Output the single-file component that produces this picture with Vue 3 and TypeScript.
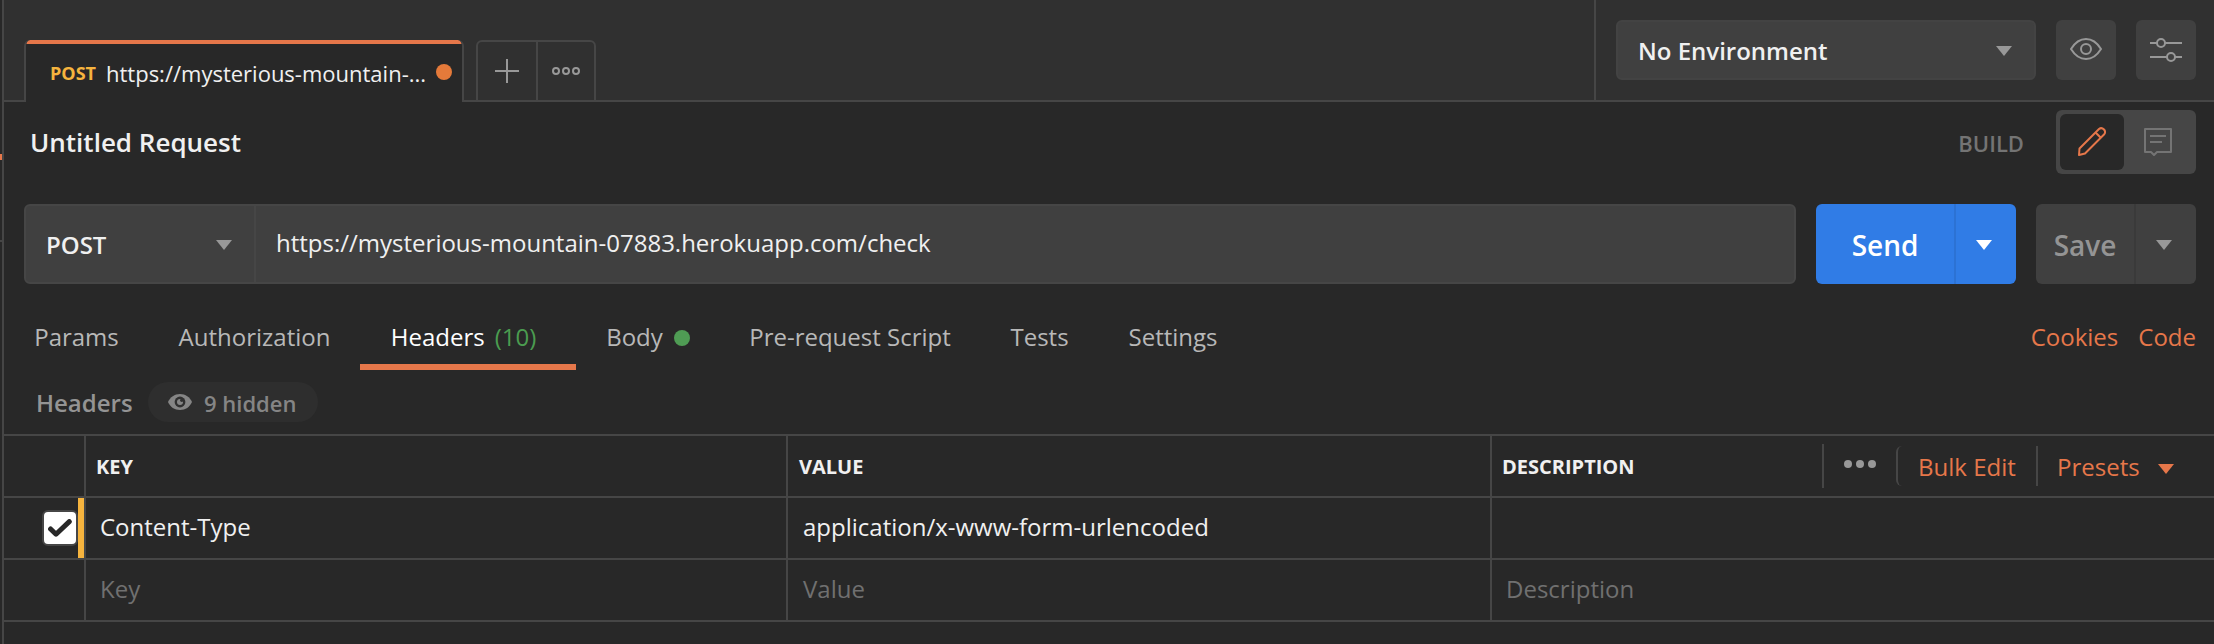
<script setup lang="ts">
interface RequestTab {
  label: string
  width: number
  count?: string
  dot?: boolean
  active?: boolean
}

interface HeaderRow {
  key: string
  value: string
  description: string
  checked: boolean
  placeholder: boolean
}

const requestTabs: RequestTab[] = [
  { label: 'Params', width: 145 },
  { label: 'Authorization', width: 211 },
  { label: 'Headers', width: 216, count: '(10)', active: true },
  { label: 'Body', width: 144, dot: true },
  { label: 'Pre-request Script', width: 260 },
  { label: 'Tests', width: 119 },
  { label: 'Settings', width: 148 },
]

const rows: HeaderRow[] = [
  { key: 'Content-Type', value: 'application/x-www-form-urlencoded', description: '', checked: true, placeholder: false },
  { key: 'Key', value: 'Value', description: 'Description', checked: false, placeholder: true },
]
</script>

<template>
  <div class="app">
    <aside class="rail"><i class="rail-mark"></i><i class="rail-line"></i></aside>
    <main class="main">
      <header class="topbar">
        <div class="tab">
          <span class="tab-method">POST</span>
          <span class="tab-name">https://mysterious-mountain-...</span>
          <i class="tab-dot"></i>
        </div>
        <div class="tab-actions">
          <button class="tab-btn">
            <svg width="24" height="24" viewBox="0 0 24 24"><path d="M0 12H24M12 0V24" stroke="#989898" stroke-width="2" /></svg>
          </button>
          <button class="tab-btn more">
            <svg width="28" height="8" viewBox="0 0 28 8" fill="none" stroke="#989898" stroke-width="2">
              <circle cx="4" cy="4" r="3" /><circle cx="14" cy="4" r="3" /><circle cx="24" cy="4" r="3" />
            </svg>
          </button>
        </div>
        <div class="env">
          <div class="env-select">
            <span>No Environment</span>
            <svg class="caret" width="16" height="10" viewBox="0 0 16 10"><path d="M0 0H16L8 10Z" /></svg>
          </div>
          <button class="icon-btn">
            <svg class="eye" width="32" height="22" viewBox="0 0 32 22" fill="none" stroke="#989898" stroke-width="2">
              <path d="M1 11C5 4.5 10 1 16 1S27 4.5 31 11C27 17.500 22 21 16 21S5 17.500 1 11Z" stroke-linejoin="round" />
              <circle cx="16" cy="11" r="5" />
            </svg>
          </button>
          <button class="icon-btn">
            <svg width="32" height="24" viewBox="0 0 32 24" fill="none" stroke="#989898" stroke-width="2">
              <path d="M0 5H7M15 5H32M0 19H17M25 19H32" />
              <circle cx="11" cy="5" r="4" /><circle cx="21" cy="19" r="4" />
            </svg>
          </button>
        </div>
      </header>

      <section class="title-row">
        <h1 class="title">Untitled Request</h1>
        <span class="build">BUILD</span>
        <div class="mode">
          <div class="mode-edit">
            <svg width="28" height="29" viewBox="0 0 28 29" fill="none" stroke="#e6774a" stroke-width="2" stroke-linejoin="round">
              <path d="M1 28L1.500 21.500L21 2Q23.500 0 26 2.500Q28.200 5 26 7.500L7 26.500Z" /><path d="M17.500 5.500L22.800 10.800" />
            </svg>
          </div>
          <div class="mode-comment">
            <svg width="28" height="28" viewBox="0 0 28 28" fill="none" stroke="#747474" stroke-width="2" stroke-linejoin="round">
              <path d="M1 1H27V24H13L10 27L7 24H1Z" /><path d="M6 8H22M6 14H18" />
            </svg>
          </div>
        </div>
      </section>

      <section class="url-row">
        <div class="url-box">
          <div class="method">
            <span>POST</span>
            <svg class="caret" width="16" height="10" viewBox="0 0 16 10"><path d="M0 0H16L8 10Z" /></svg>
          </div>
          <div class="url"><span>https://mysterious-mountain-07883.herokuapp.com/check</span></div>
        </div>
        <div class="split send">
          <div class="split-label"><span>Send</span></div>
          <div class="split-caret"><svg class="caret" width="16" height="10" viewBox="0 0 16 10"><path d="M0 0H16L8 10Z" /></svg></div>
        </div>
        <div class="split save">
          <div class="split-label"><span>Save</span></div>
          <div class="split-caret"><svg class="caret" width="16" height="10" viewBox="0 0 16 10"><path d="M0 0H16L8 10Z" /></svg></div>
        </div>
      </section>

      <nav class="req-tabs">
        <div
          v-for="tab in requestTabs"
          :key="tab.label"
          class="req-tab"
          :class="{ active: tab.active }"
          :style="{ width: tab.width + 'px' }"
        >
          <span>{{ tab.label }}</span>
          <span v-if="tab.count" class="count">{{ tab.count }}</span>
          <i v-if="tab.dot" class="green-dot"></i>
        </div>
        <div class="links"><a>Cookies</a><a>Code</a></div>
      </nav>

      <section class="sub">
        <span class="sub-title">Headers</span>
        <div class="pill">
          <svg width="24" height="16" viewBox="0 0 24 16">
            <path d="M12 0C6.500 0 2.200 3 0 8C2.200 13 6.500 16 12 16S21.800 13 24 8C21.800 3 17.500 0 12 0Z" fill="#858585" />
            <circle cx="12" cy="8" r="5.400" fill="#303030" />
            <circle cx="12" cy="8" r="3" fill="#858585" />
            <circle cx="13.800" cy="6.200" r="1.700" fill="#303030" />
          </svg>
          <span>9 hidden</span>
        </div>
      </section>

      <section class="table">
        <div class="row head">
          <div class="cell check"></div>
          <div class="cell key">KEY</div>
          <div class="cell value">VALUE</div>
          <div class="cell desc">
            <span>DESCRIPTION</span>
            <div class="tools">
              <div class="tool dots">
                <svg width="32" height="8" viewBox="0 0 32 8" fill="#989898"><circle cx="4" cy="4" r="4" /><circle cx="16" cy="4" r="4" /><circle cx="28" cy="4" r="4" /></svg>
              </div>
              <div class="tool bulk"><span>Bulk Edit</span></div>
              <div class="tool presets">
                <span>Presets</span>
                <svg class="caret" width="16" height="10" viewBox="0 0 16 10"><path d="M0 0H16L8 10Z" /></svg>
              </div>
            </div>
          </div>
        </div>
        <div v-for="row in rows" :key="row.key" class="row" :class="{ placeholder: row.placeholder }">
          <div class="cell check" :class="{ marked: row.checked }">
            <div v-if="row.checked" class="box">
              <svg width="24" height="18" viewBox="0 0 24 18" fill="none" stroke="#282828" stroke-width="5" stroke-linecap="round" stroke-linejoin="round">
                <path d="M2.600 10L8 15.200L21.300 2.600" />
              </svg>
            </div>
          </div>
          <div class="cell key"><span>{{ row.key }}</span></div>
          <div class="cell value"><span>{{ row.value }}</span></div>
          <div class="cell desc"><span>{{ row.description }}</span></div>
        </div>
      </section>
    </main>
  </div>
</template>

<style>
body {
  margin: 0;
  background: #282828;
}
</style>

<style scoped>
* {
  box-sizing: border-box;
}
.app {
  display: flex;
  width: 2214px;
  height: 644px;
  overflow: hidden;
  background: #282828;
  color: #f0f0f0;
  font-family: 'Open Sans', 'Noto Sans', sans-serif;
  font-size: 24px;
  line-height: 32px;
  white-space: nowrap;
}
svg {
  display: block;
  flex: none;
}
.caret {
  fill: #989898;
}
button {
  margin: 0;
  padding: 0;
  border: 0;
  background: none;
}
.rail {
  width: 4px;
  flex: none;
  border-right: 2px solid #464646;
  display: flex;
  flex-direction: column;
}
.rail-mark {
  height: 6px;
  margin-top: 154px;
  background: #e6774a;
}
.rail-line {
  height: 2px;
  margin-top: 80px;
  background: #464646;
}
.main {
  width: 2210px;
  flex: none;
}
.topbar {
  display: flex;
  align-items: flex-end;
  height: 102px;
  padding-left: 20px;
  background: linear-gradient(#464646, #464646) bottom / 100% 2px no-repeat #303030;
}
.tab {
  display: flex;
  align-items: center;
  width: 440px;
  height: 62px;
  padding: 2px 10px 0 24px;
  background: linear-gradient(#e6774a, #e6774a) top / 100% 4px no-repeat #282828;
  background-clip: padding-box;
  border: solid #464646;
  border-width: 0 2px;
  border-radius: 6px 6px 0 0;
}
.tab-method {
  width: 56px;
  padding-top: 2px;
  color: #f6b43e;
  font-size: 18px;
  font-weight: 700;
}
.tab-name {
  width: 330px;
  padding-top: 2px;
  font-size: 22px;
}
.tab-dot {
  width: 16px;
  height: 16px;
  border-radius: 50%;
  background: #e57a3a;
}
.tab-actions {
  display: flex;
  width: 120px;
  height: 62px;
  margin-left: 12px;
  border: 2px solid #464646;
  border-radius: 6px 6px 0 0;
}
.tab-btn {
  display: flex;
  align-items: center;
  justify-content: center;
  width: 58px;
}
.tab-btn.more {
  border-left: 2px solid #464646;
}
.env {
  display: flex;
  gap: 20px;
  height: 102px;
  margin-left: auto;
  padding: 20px 18px 0 20px;
  border-left: 2px solid #464646;
}
.env-select {
  display: flex;
  align-items: center;
  justify-content: space-between;
  width: 420px;
  height: 60px;
  padding: 0 22px 0 20px;
  border: 2px solid #434343;
  border-radius: 6px;
  background: #404040;
  font-weight: 600;
}
.env-select span {
  padding-top: 2px;
}
.env-select .caret {
  margin-top: 2px;
}
.icon-btn {
  display: flex;
  align-items: center;
  justify-content: center;
  width: 60px;
  height: 60px;
  border-radius: 6px;
  background: #404040;
}
.eye {
  margin-top: -2px;
}
.title-row {
  display: flex;
  align-items: center;
  height: 80px;
  padding: 0 18px 0 26px;
}
.title {
  margin: 0;
  font-size: 26px;
  font-weight: 600;
}
.build {
  margin-left: auto;
  margin-right: 32px;
  padding-top: 1px;
  color: #747474;
  font-size: 22px;
  font-weight: 600;
}
.mode {
  display: flex;
  width: 140px;
  height: 64px;
  padding: 4px;
  border-radius: 6px;
  background: #464646;
}
.mode-edit {
  width: 64px;
  height: 56px;
  padding: 13px 0 0 18px;
  border-radius: 6px;
  background: #282828;
}
.mode-comment {
  padding: 14px 0 0 20px;
}
.url-row {
  display: flex;
  gap: 20px;
  height: 80px;
  margin-top: 22px;
  padding: 0 18px 0 20px;
}
.url-box {
  display: flex;
  width: 1772px;
  border: 2px solid #464646;
  border-radius: 6px;
  background: #404040;
}
.method {
  display: flex;
  align-items: center;
  justify-content: space-between;
  width: 230px;
  padding: 0 22px 0 20px;
  border-right: 2px solid #464646;
  font-weight: 600;
}
.method span {
  padding-top: 2px;
}
.method .caret,
.split-caret .caret {
  margin-top: 2px;
}
.url {
  display: flex;
  align-items: center;
  padding: 0 0 3px 20px;
}
.split {
  display: flex;
  border-radius: 6px;
  font-size: 28px;
  font-weight: 600;
}
.split-label,
.split-caret {
  display: flex;
  align-items: center;
  justify-content: center;
}
.split-label span {
  padding-top: 1px;
}
.split-caret {
  flex: 1;
  padding-right: 4px;
}
.send {
  width: 200px;
  background: #307ce6;
  color: #fff;
}
.send .split-label {
  width: 140px;
  border-right: 2px solid #2c72d4;
}
.send .caret {
  fill: #fff;
}
.save {
  width: 160px;
  background: #404040;
  color: #949494;
}
.save .split-label {
  width: 100px;
  border-right: 2px solid #3a3a3a;
}
.req-tabs {
  display: flex;
  height: 86px;
  padding-right: 18px;
}
.req-tab {
  display: flex;
  justify-content: center;
  flex: none;
  padding-top: 37px;
  color: #b8b8b8;
}
.req-tab.active {
  padding-right: 9px;
  background: linear-gradient(#e6774a, #e6774a) bottom / 100% 6px no-repeat;
  color: #fff;
}
.count {
  margin-left: 10px;
  color: #4b9c50;
}
.green-dot {
  width: 16px;
  height: 16px;
  margin: 9px 0 0 11px;
  border-radius: 50%;
  background: #4f9c54;
}
.links {
  display: flex;
  gap: 20px;
  margin-left: auto;
  padding-top: 37px;
  color: #e6774a;
}
.sub {
  display: flex;
  height: 64px;
  padding: 12px 0 0 32px;
}
.sub-title {
  width: 112px;
  padding-top: 5px;
  color: #949494;
  font-weight: 600;
}
.pill {
  display: flex;
  align-items: center;
  width: 170px;
  height: 40px;
  padding-left: 20px;
  border-radius: 20px;
  background: #2e2e2e;
  color: #858585;
  font-size: 22px;
  font-weight: 600;
}
.pill span {
  margin-left: 12px;
  padding-top: 2px;
}
.table {
  border-top: 2px solid #464646;
}
.row {
  display: flex;
  height: 62px;
  border-bottom: 2px solid #464646;
}
.cell {
  display: flex;
  align-items: center;
  padding: 0 0 3px 14px;
  border-right: 2px solid #464646;
}
.check {
  width: 82px;
  padding: 0;
}
.marked {
  justify-content: flex-end;
  background: linear-gradient(#f6b43e, #f6b43e) right / 6px 100% no-repeat;
}
.box {
  display: flex;
  align-items: center;
  justify-content: center;
  width: 36px;
  height: 36px;
  margin-right: 6px;
  border: 2px solid #464646;
  border-radius: 6px;
  background: #fff;
}
.key {
  width: 702px;
}
.cell.value {
  width: 704px;
  padding-left: 15px;
}
.desc {
  flex: 1;
  border-right: 0;
}
.head .cell {
  padding: 1px 0 0 10px;
  font-size: 20px;
  font-weight: 700;
}
.head .cell.value {
  padding-left: 11px;
}
.placeholder {
  color: #707070;
}
.tools {
  display: flex;
  align-items: center;
  width: 392px;
  margin: -1px 0 0 auto;
  color: #e6774a;
  font-size: 24px;
  font-weight: 400;
}
.tool {
  display: flex;
  align-items: center;
  height: 40px;
  border-left: 2px solid #464646;
}
.tool span {
  padding-top: 2px;
}
.dots {
  width: 74px;
  height: 44px;
  padding: 0 0 4px 20px;
}
.bulk {
  width: 140px;
  padding-left: 20px;
  border-radius: 6px 0 0 6px;
}
.presets {
  padding-left: 19px;
}
.presets .caret {
  margin: 6px 0 0 18px;
  fill: #e6774a;
}
</style>
